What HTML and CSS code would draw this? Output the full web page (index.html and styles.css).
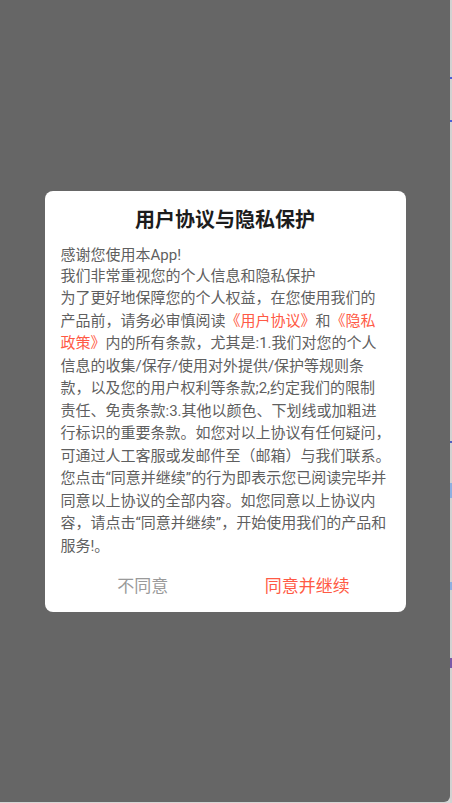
FILE: index.html
```html
<!DOCTYPE html>
<html lang="zh-CN">
<head>
<meta charset="utf-8">
<title>用户协议与隐私保护</title>
<link rel="stylesheet" href="styles.css">
</head>
<body>
<div class="screen">
  <div class="overlay">
    <div class="dialog">
      <h1 class="title">用户协议与隐私保护</h1>
      <div class="content">
        <p class="intro">感谢您使用本App!<br>我们非常重视您的个人信息和隐私保护</p>
        <p class="terms">为了更好地保障您的个人权益，在您使用我们的<br>产品前，请务必审慎阅读<span class="link">《用户协议》</span>和<span class="link">《隐私<br>政策》</span>内的所有条款，尤其是:1.我们对您的个人<br>信息的收集/保存/使用对外提供/保护等规则条<br>款，以及您的用户权利等条款;2,约定我们的限制<br>责任、免责条款:3.其他以颜色、下划线或加粗进<br>行标识的重要条款。如您对以上协议有任何疑问，<br>可通过人工客服或发邮件至（邮箱）与我们联系。<br>您点击“同意并继续”的行为即表示您已阅读完毕并<br>同意以上协议的全部内容。如您同意以上协议内<br>容，请点击“同意并继续”，开始使用我们的产品和<br>服务!。</p>
      </div>
      <div class="actions">
        <button class="btn btn-decline" type="button">不同意</button>
        <button class="btn btn-accept" type="button">同意并继续</button>
      </div>
    </div>
  </div>
  <div class="edge"></div>
</div>
</body>
</html>
```

FILE: styles.css
```css
* {
  box-sizing: border-box;
}

html, body {
  margin: 0;
  padding: 0;
}

body {
  width: 452px;
  height: 803px;
  overflow: hidden;
  background: #d6d6d6;
  font-family: Roboto, "Noto Sans CJK SC", sans-serif;
}

.screen {
  display: flex;
  width: 452px;
  height: 803px;
}

.overlay {
  width: 450px;
  height: 802px;
  background: #666666;
  border-bottom-right-radius: 6px;
  display: flex;
  align-items: center;
  justify-content: center;
}

.edge {
  flex: 1;
  height: 803px;
  background:
    linear-gradient(to bottom,
      transparent 77px, #4b5fd6 77px, #4b5fd6 79px, transparent 79px,
      transparent 120px, #4b5fd6 120px, #4b5fd6 122px, transparent 122px,
      transparent 441px, #5060c0 441px, #5060c0 443px, transparent 443px,
      transparent 483px, #8fb0e0 483px, #8fb0e0 498px, transparent 498px,
      transparent 582px, #8fb0e0 582px, #8fb0e0 590px, transparent 590px,
      transparent 658px, #7a5aa8 658px, #7a5aa8 668px, transparent 668px),
    #d2d2d2;
}

.dialog {
  width: 361px;
  margin-top: 1px;
  background: #ffffff;
  border-radius: 8px;
  padding: 16px 16px 2px 16px;
}

.title {
  margin: 0;
  font-size: 20px;
  line-height: 26px;
  font-weight: 700;
  color: #1c1c1c;
  text-align: center;
}

.content {
  margin-top: 12px;
  color: #5f5f5f;
  font-size: 15px;
  white-space: nowrap;
}

.content p {
  margin: 0;
}

.intro {
  line-height: 21px;
}

.terms {
  line-height: 22.5px;
}

.link {
  color: #ff5a45;
}

.actions {
  display: flex;
  margin-top: 5px;
}

.btn {
  flex: 1;
  height: 48px;
  border: 0;
  background: transparent;
  padding: 0;
  font-family: Roboto, "Noto Sans CJK SC", sans-serif;
  font-size: 17px;
  line-height: 48px;
  text-align: center;
}

.btn-decline {
  color: #9a9a9a;
}

.btn-accept {
  color: #ff5a45;
}
```
